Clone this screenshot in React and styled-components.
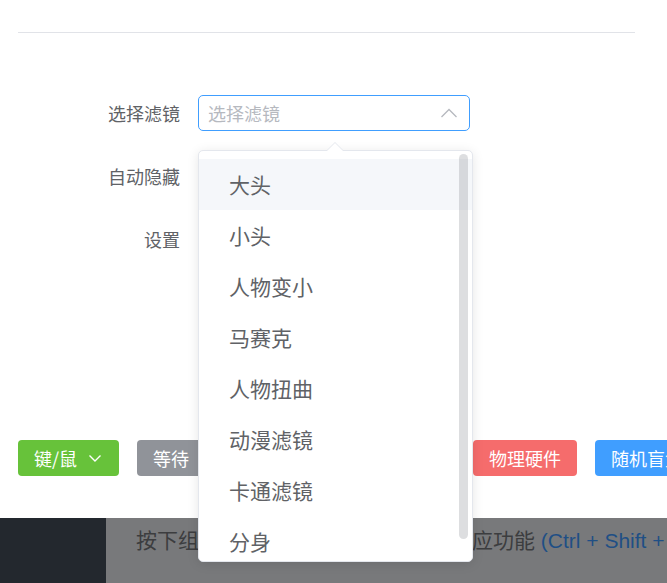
import React from "react";
import styled, { createGlobalStyle } from "styled-components";

const GlobalStyle = createGlobalStyle`
  html, body { margin: 0; padding: 0; background: #ffffff; overflow: hidden; }
  body { font-family: "Noto Sans CJK SC", "Noto Sans", sans-serif; }
  * { box-sizing: border-box; }
`;

const Page = styled.div`
  width: 667px;
  height: 583px;
  position: relative;
  overflow: hidden;
  display: flex;
  flex-direction: column;
`;

const Dialog = styled.div`
  height: 518px;
  flex-shrink: 0;
  background: #ffffff;
  padding: 0 18px;
  display: flex;
  flex-direction: column;
`;

const Divider = styled.div`
  margin-top: 32px;
  width: 617px;
  height: 1px;
  background: #e1e3e8;
`;

const Form = styled.div`
  margin-top: 62px;
  display: flex;
  flex-direction: column;
  gap: 27px;
`;

const Row = styled.div`
  display: flex;
  align-items: center;
  height: 36px;
`;

const Label = styled.div`
  width: 180px;
  padding-right: 18px;
  text-align: right;
  font-size: 18px;
  color: #606266;
  white-space: nowrap;
`;

const SelectWrap = styled.div`
  position: relative;
  width: 272px;
  height: 36px;
`;

const SelectBox = styled.div`
  height: 36px;
  border: 1px solid #409eff;
  border-radius: 5px;
  padding: 0 12px 0 9px;
  display: flex;
  align-items: center;
  justify-content: space-between;
  background: #fff;
`;

const Placeholder = styled.span`
  font-size: 18px;
  color: #b6b9bf;
`;

const Dropdown = styled.div`
  position: absolute;
  z-index: 10;
  left: 0;
  top: 55px;
  width: 275px;
  height: 412px;
  background: #fff;
  border: 1px solid #e4e7ed;
  border-radius: 5px;
  box-shadow: 0 2px 12px 0 rgba(0, 0, 0, 0.1);
`;

const Arrow = styled.div`
  position: absolute;
  top: -9px;
  left: 127px;
  width: 0;
  height: 0;
  border-left: 9px solid transparent;
  border-right: 9px solid transparent;
  border-bottom: 9px solid #e4e7ed;
  &::after {
    content: "";
    position: absolute;
    left: -8px;
    top: 1px;
    border-left: 8px solid transparent;
    border-right: 8px solid transparent;
    border-bottom: 8px solid #ffffff;
  }
`;

const List = styled.ul`
  list-style: none;
  margin: 0;
  padding: 8px 0 0;
  height: 100%;
  overflow: hidden;
  border-radius: 5px;
`;

const Item = styled.li`
  height: 51px;
  line-height: 51px;
  padding-left: 30px;
  font-size: 21px;
  color: #606266;
  background: ${(p) => (p.$hover ? "#f5f7fa" : "transparent")};
  white-space: nowrap;
`;

const Thumb = styled.div`
  position: absolute;
  right: 4px;
  top: 3px;
  width: 9px;
  height: 385px;
  border-radius: 5px;
  background: rgba(144, 147, 153, 0.3);
`;

const Switch = styled.div`
  width: 60px;
  height: 30px;
  border-radius: 15px;
  background: #dcdfe6;
`;

const SmallBtn = styled.div`
  height: 36px;
  padding: 0 16px;
  border: 1px solid #dcdfe6;
  border-radius: 4px;
  font-size: 18px;
  line-height: 34px;
  color: #606266;
`;

const ButtonRow = styled.div`
  margin-top: 183px;
  display: flex;
  gap: 18px;
`;

const COLORS = {
  green: "#67c23a",
  gray: "#909399",
  red: "#f56c6c",
  blue: "#409eff",
};

const Button = styled.div`
  flex-shrink: 0;
  height: 36px;
  padding: 0 16px;
  border-radius: 4px;
  background: ${(p) => COLORS[p.$color]};
  color: #ffffff;
  font-size: 18px;
  display: flex;
  align-items: center;
  white-space: nowrap;
`;

const Caret = styled.svg`
  margin-left: ${(p) => p.$gap}px;
  width: 16px;
  height: 16px;
`;

const Bottom = styled.div`
  flex: 1;
  display: flex;
`;

const Side = styled.div`
  width: 106px;
  background: #23282e;
`;

const Main = styled.div`
  flex: 1;
  background: #78797b;
  padding: 6px 0 0 30px;
  font-size: 21px;
  color: #3c3d3f;
  white-space: nowrap;
  overflow: hidden;
  font-family: "Liberation Sans", "Noto Sans CJK SC", sans-serif;
`;

const Keys = styled.span`
  color: #1f4f85;
`;

const ChevronDown = ({ gap = 10 }) => (
  <Caret $gap={gap} viewBox="0 0 16 16" fill="none">
    <polyline points="2.5,5.5 8,11 13.5,5.5" stroke="#ffffff" strokeWidth="1.4" />
  </Caret>
);

const items = ["大头", "小头", "人物变小", "马赛克", "人物扭曲", "动漫滤镜", "卡通滤镜", "分身"];

export default function App() {
  return (
    <Page>
      <GlobalStyle />
      <Dialog>
        <Divider />
        <Form>
          <Row>
            <Label>选择滤镜</Label>
            <SelectWrap>
              <SelectBox>
                <Placeholder>选择滤镜</Placeholder>
                <svg width="16" height="10" viewBox="0 0 16 10" fill="none">
                  <polyline points="0.5,9 8,1.5 15.5,9" stroke="#b6b9bf" strokeWidth="1.3" />
                </svg>
              </SelectBox>
              <Dropdown>
                <Arrow />
                <List>
                  {items.map((t, i) => (
                    <Item key={t} $hover={i === 0}>
                      {t}
                    </Item>
                  ))}
                </List>
                <Thumb />
              </Dropdown>
            </SelectWrap>
          </Row>
          <Row>
            <Label>自动隐藏</Label>
            <Switch />
          </Row>
          <Row>
            <Label>设置</Label>
            <SmallBtn>打开设置</SmallBtn>
          </Row>
        </Form>
        <ButtonRow>
          <Button $color="green">
            键/鼠
            <ChevronDown />
          </Button>
          <Button $color="gray">等待</Button>
          <Button $color="gray">
            鼠标宏
            <ChevronDown gap={8} />
          </Button>
          <Button $color="gray">系统操作</Button>
          <Button $color="red">物理硬件</Button>
          <Button $color="blue">随机盲盒</Button>
        </ButtonRow>
      </Dialog>
      <Bottom>
        <Side />
        <Main>
          按下组合键可以快速地启用或关闭相应功能 <Keys>(Ctrl + Shift + F)</Keys>
        </Main>
      </Bottom>
    </Page>
  );
}
